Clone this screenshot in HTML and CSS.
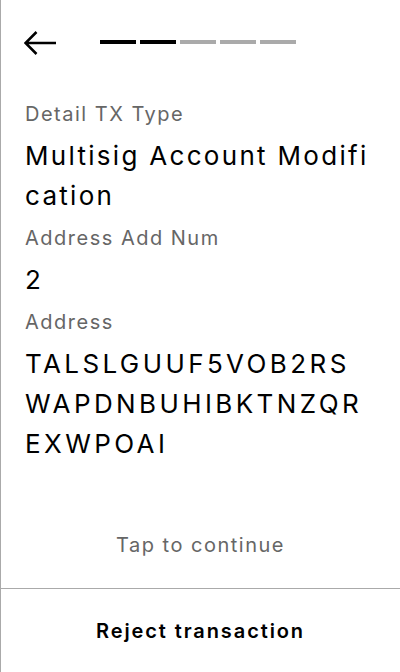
FILE: index.html
```html
<!DOCTYPE html>
<html>
<head>
<meta charset="utf-8">
<link rel="stylesheet" href="styles.css">
</head>
<body>
<div class="screen">
  <div class="header">
    <svg class="back" width="32" height="24" viewBox="0 0 32 24">
      <path d="M32 12H1.5M12.5 1L1.5 12L12.5 23" fill="none" stroke="#000" stroke-width="2.5"/>
    </svg>
    <div class="progress">
      <span class="bar on"></span>
      <span class="bar on"></span>
      <span class="bar"></span>
      <span class="bar"></span>
      <span class="bar"></span>
    </div>
  </div>
  <div class="content">
    <div class="field">
      <div class="label">Detail TX Type</div>
      <div class="value">Multisig Account Modification</div>
    </div>
    <div class="field">
      <div class="label">Address Add Num</div>
      <div class="value">2</div>
    </div>
    <div class="field">
      <div class="label">Address</div>
      <div class="value addr">TALSLGUUF5VOB2RSWAPDNBUHIBKTNZQREXWPOAI</div>
    </div>
  </div>
  <div class="tap">Tap to continue</div>
  <div class="reject">Reject transaction</div>
</div>
</body>
</html>
```
FILE: styles.css
```css
html, body {
  margin: 0;
  padding: 0;
  background: #fff;
}
.screen {
  width: 400px;
  height: 672px;
  box-sizing: border-box;
  border-left: 1px solid #aaaaaa;
  display: flex;
  flex-direction: column;
  font-family: Inter, "Noto Sans", sans-serif;
  color: #000;
}
.header {
  display: flex;
  align-items: flex-start;
  padding: 31px 0 0 23px;
  height: 24px;
}
.back {
  display: block;
  flex: none;
}
.progress {
  display: flex;
  gap: 4px;
  margin: 9px 0 0 44px;
}
.bar {
  width: 36px;
  height: 4px;
  background: #aaaaaa;
}
.bar.on {
  background: #000;
}
.content {
  flex: 1;
  padding: 44px 28px 0 24px;
  display: flex;
  flex-direction: column;
  gap: 7px;
}
.field {
  display: flex;
  flex-direction: column;
  gap: 7px;
}
.label {
  font-size: 20px;
  line-height: 30px;
  letter-spacing: 1.5px;
  color: #666666;
}
.value {
  font-size: 26px;
  line-height: 40px;
  letter-spacing: 2.3px;
  word-break: break-all;
}
.value.addr {
  letter-spacing: 3.4px;
}
.tap {
  text-align: center;
  font-size: 20px;
  line-height: 30px;
  letter-spacing: 1.5px;
  color: #666666;
  padding-bottom: 28px;
}
.reject {
  border-top: 1px solid #aaaaaa;
  height: 83px;
  display: flex;
  align-items: center;
  justify-content: center;
  font-size: 20px;
  font-weight: 600;
  letter-spacing: 1.9px;
}
```
